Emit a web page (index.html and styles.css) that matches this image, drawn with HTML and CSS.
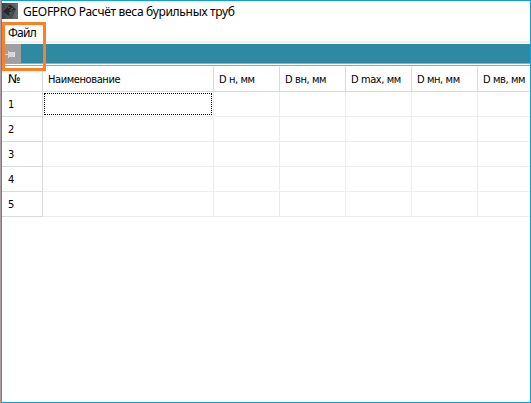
FILE: index.html
```html
<!DOCTYPE html>
<html lang="ru">
<head>
<meta charset="utf-8">
<title>GEOFPRO Расчёт веса бурильных труб</title>
<link rel="stylesheet" href="styles.css">
</head>
<body>
<div class="window">
  <header class="titlebar">
    <svg class="logo" width="16" height="16" viewBox="0 0 16 16">
      <defs><linearGradient id="steel"><stop offset="0" stop-color="#3a3f45"/><stop offset="1" stop-color="#6a6e75"/></linearGradient></defs>
      <rect width="16" height="16" fill="url(#steel)"/>
      <path d="M1 8 8 1l6 5-5 9z" fill="#22282d"/>
      <path d="M8 9l6-3-5 9z" fill="#414b4f"/>
      <path d="M1 8 8 1l6 5" fill="none" stroke="#596268" stroke-width=".6"/>
      <path d="M6 5l2-1M9 8V6l2-1M8 9v5" fill="none" stroke="#7b8387" stroke-width=".7"/>
    </svg>
    <span class="caption">GEOFPRO Расчёт веса бурильных труб</span>
  </header>
  <nav class="menu"><span class="menu-item">Файл</span></nav>
  <div class="toolbar">
    <div class="pin">
      <svg width="19" height="19" viewBox="0 0 19 19" shape-rendering="crispEdges">
        <path d="M3 10h3v1H3zM6 7h1v7H6zM7 8h6v5H7z" fill="#d6d6d8"/>
        <path d="M12 8h1v5h-1z" fill="#e6e6e8"/>
      </svg>
    </div>
  </div>
  <table class="grid">
    <colgroup><col class="c-num"><col class="c-name"><col class="c-dim"><col class="c-dim"><col class="c-dim"><col class="c-dim"><col class="c-last"></colgroup>
    <thead>
      <tr><th class="num-head">№</th><th>Наименование</th><th>D н, мм</th><th>D вн, мм</th><th>D max, мм</th><th>D мн, мм</th><th>D мв, мм</th></tr>
    </thead>
    <tbody>
      <tr><th>1</th><td><div class="focus"></div></td><td></td><td></td><td></td><td></td><td></td></tr>
      <tr><th>2</th><td></td><td></td><td></td><td></td><td></td><td></td></tr>
      <tr><th>3</th><td></td><td></td><td></td><td></td><td></td><td></td></tr>
      <tr><th>4</th><td></td><td></td><td></td><td></td><td></td><td></td></tr>
      <tr><th>5</th><td></td><td></td><td></td><td></td><td></td><td></td></tr>
    </tbody>
  </table>
  <div class="highlight"></div>
</div>
</body>
</html>
```
FILE: styles.css
```css
* { box-sizing: border-box; }
body {
  margin: 0;
  height: 403px;
  padding-left: 1px;
  background: #aaa0a4;
  overflow: hidden;
}
.window {
  position: relative;
  height: 403px;
  border: 1px solid #0c9fe2;
  background: #fff;
  color: #000;
}
.titlebar {
  display: flex;
  align-items: center;
  height: 22px;
  gap: 5px;
  padding-bottom: 1px;
}
.logo { flex: none; margin-top: -1px; }
.caption {
  font: 12px/20px "Noto Sans", "Open Sans", sans-serif;
  letter-spacing: -0.3px;
  white-space: nowrap;
}
.menu {
  height: 18px;
  padding-left: 6px;
  font: 12px/20px "Noto Sans", "Open Sans", sans-serif;
  letter-spacing: -0.7px;
}
.menu-item { display: block; }
.toolbar {
  height: 25px;
  border-top: 2px solid #f0f0f0;
  border-bottom: 1px solid #a0a0a6;
  padding-top: 1px;
  background: linear-gradient(#fff 1px, #2e8aa3 1px 20px, #a6a6aa 20px 21px, #fff 21px);
}
.pin { width: 19px; height: 19px; background: #9f9fa3; }
.pin svg { display: block; }
.grid {
  width: 528px;
  margin-top: 1px;
  table-layout: fixed;
  border-collapse: separate;
  border-spacing: 0;
  font: 11px/13px "DejaVu Sans Condensed", "DejaVu Sans", sans-serif;
}
.c-num { width: 41px; }
.c-name { width: 171px; }
.c-dim { width: 66px; }
.c-last { width: 52px; }
.grid th, .grid td {
  height: 25px;
  padding: 0;
  border-right: 1px solid #ededed;
  border-bottom: 1px solid #ededed;
}
.grid th {
  padding: 1px 0 0 5px;
  border-color: #dadada;
  font-weight: normal;
  text-align: left;
  white-space: nowrap;
  letter-spacing: -0.4px;
}
.grid th:first-child { padding-left: 6px; }
.grid .num-head { font-family: "DejaVu Sans", sans-serif; font-size: 12px; letter-spacing: 0; }
.grid tr > :last-child { border-right: 0; }
.focus { height: 22px; margin: 0 1px; border: 1px dotted #000; }
.highlight {
  position: absolute;
  left: 0;
  top: 21px;
  width: 44px;
  height: 49px;
  border: 3px solid #ff7f27;
}
```
